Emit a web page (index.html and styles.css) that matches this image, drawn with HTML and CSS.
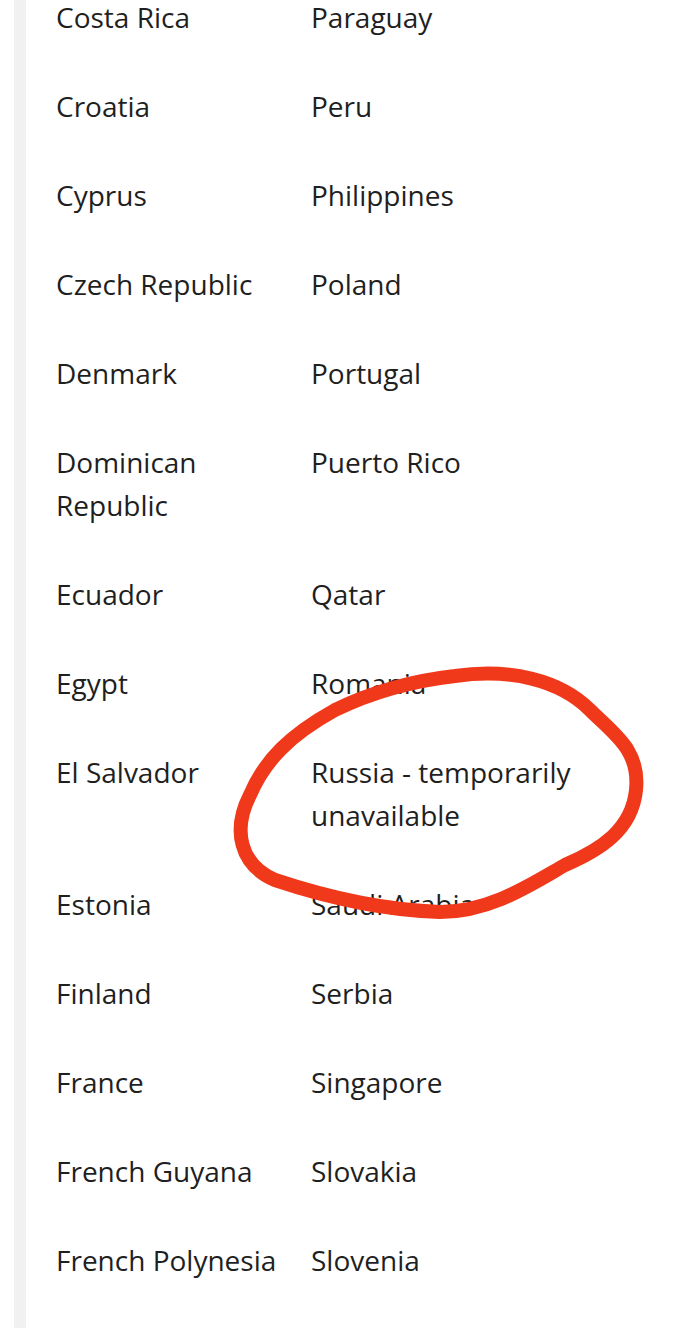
FILE: index.html
```html
<!DOCTYPE html>
<html lang="en">
<head>
<meta charset="utf-8">
<title>Countries</title>
<link rel="stylesheet" href="styles.css">
</head>
<body>
<div class="page">
  <div class="list">
    <div class="cell">Costa Rica</div><div class="cell">Paraguay</div>
    <div class="cell">Croatia</div><div class="cell">Peru</div>
    <div class="cell">Cyprus</div><div class="cell">Philippines</div>
    <div class="cell">Czech Republic</div><div class="cell">Poland</div>
    <div class="cell">Denmark</div><div class="cell">Portugal</div>
    <div class="cell">Dominican Republic</div><div class="cell">Puerto Rico</div>
    <div class="cell">Ecuador</div><div class="cell">Qatar</div>
    <div class="cell">Egypt</div><div class="cell">Romania</div>
    <div class="cell">El Salvador</div><div class="cell">Russia - temporarily unavailable</div>
    <div class="cell">Estonia</div><div class="cell">Saudi Arabia</div>
    <div class="cell">Finland</div><div class="cell">Serbia</div>
    <div class="cell">France</div><div class="cell">Singapore</div>
    <div class="cell">French Guyana</div><div class="cell">Slovakia</div>
    <div class="cell">French Polynesia</div><div class="cell">Slovenia</div>
  </div>
</div>
<svg class="mark" width="700" height="1328" viewBox="0 0 700 1328" aria-hidden="true">
  <path d="M 455 676 C 510 668, 560 680, 590 710 C 615 735, 640 750, 636 790 C 632 830, 600 850, 565 865 C 530 885, 490 912, 440 912 C 380 910, 320 895, 275 880 C 240 865, 232 830, 250 795 C 265 760, 290 735, 335 710 C 380 688, 420 680, 455 676 Z" fill="none" stroke="#f0391b" stroke-width="14" stroke-linecap="round" stroke-linejoin="round"/>
</svg>
</body>
</html>
```
FILE: styles.css
```css
html, body {
  margin: 0;
  padding: 0;
  background: #ffffff;
}
body {
  position: relative;
  width: 700px;
  height: 1328px;
  overflow: hidden;
  font-family: "Open Sans", Roboto, "Liberation Sans", sans-serif;
  color: #1f1f1f;
}
.page {
  margin-left: 14px;
  border-left: 12px solid #f1f1f1;
  min-height: 1400px;
  padding-left: 30px;
}
.list {
  display: grid;
  grid-template-columns: 232px 320px;
  column-gap: 23px;
  margin-top: -27px;
}
.cell {
  font-size: 28px;
  line-height: 43px;
  padding: 23px 0;
}
.mark {
  position: absolute;
  top: 0;
  left: 0;
  pointer-events: none;
}
```
